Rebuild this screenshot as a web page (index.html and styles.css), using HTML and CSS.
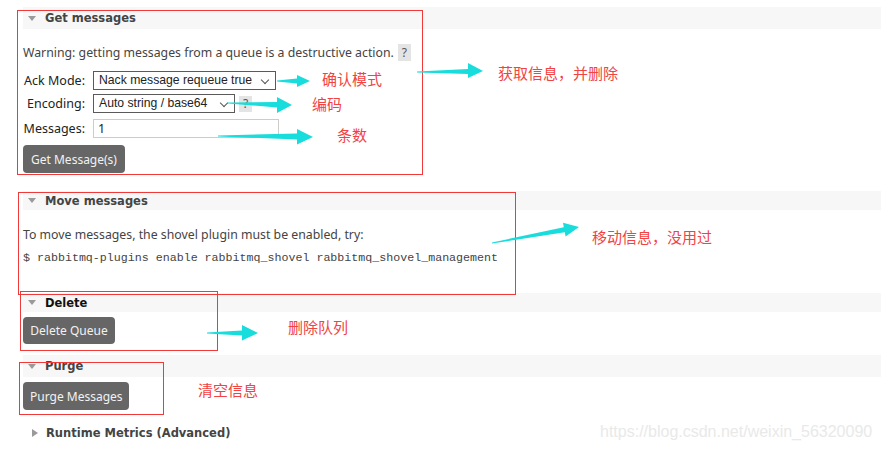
FILE: index.html
```html
<!DOCTYPE html>
<html lang="zh">
<head>
<meta charset="utf-8">
<title>Queue actions</title>
<link rel="stylesheet" href="styles.css">
</head>
<body>
<div class="page">
  <section class="sec sec-get">
    <h2 class="sec-head"><span class="tri"></span>Get messages</h2>
    <p class="warn">Warning: getting messages from a queue is a destructive action. <span class="help">?</span></p>
    <div class="form">
      <div class="row row-ack">
        <label class="lbl">Ack Mode:</label>
        <div class="select sel-ack">Nack message requeue true<span class="chev"></span></div>
      </div>
      <div class="row row-enc">
        <label class="lbl">Encoding:</label>
        <div class="select sel-enc">Auto string / base64<span class="chev"></span></div>
        <span class="help help-enc">?</span>
      </div>
      <div class="row row-msg">
        <label class="lbl">Messages:</label>
        <div class="input">1</div>
      </div>
    </div>
    <button class="btn btn-get">Get Message(s)</button>
  </section>

  <section class="sec sec-move">
    <h2 class="sec-head"><span class="tri"></span>Move messages</h2>
    <p class="move-text">To move messages, the shovel plugin must be enabled, try:</p>
    <p class="cmd">$ rabbitmq-plugins enable rabbitmq_shovel rabbitmq_shovel_management</p>
  </section>

  <section class="sec sec-del">
    <h2 class="sec-head head-del"><span class="tri"></span>Delete</h2>
    <button class="btn btn-del">Delete Queue</button>
  </section>

  <section class="sec sec-purge">
    <h2 class="sec-head head-purge"><span class="tri"></span>Purge</h2>
    <button class="btn btn-purge">Purge Messages</button>
  </section>

  <section class="sec sec-runtime">
    <h2 class="sec-head head-plain"><span class="tri tri-right"></span>Runtime Metrics (Advanced)</h2>
  </section>
</div>

<div class="annot">
  <div class="rbox rbox-get"></div>
  <div class="rbox rbox-move"></div>
  <div class="rbox rbox-del"></div>
  <div class="rbox rbox-purge"></div>

  <svg class="arrows" width="881" height="451" viewBox="0 0 881 451">
    <polygon points="277,80.5 297,78.5 297,75 310,81 297,87 297,83.5 277,81.5"/>
    <polygon points="228,102.5 277,102 277,97 292,105 277,113 277,107.5 228,103.5"/>
    <polygon points="218,135.5 297,133.5 297,129 313,137 297,144.5 297,139.5 218,136.5"/>
    <polygon points="417,71.5 468,69 468,63 483,71 468,78 468,74 417,72.5"/>
    <polygon points="492,243.5 564.8,232.2 565.6,236.6 579,227 563,222.8 563.8,227.2 492,242.5"/>
    <polygon points="207,332.5 242,330.5 242,325 258,333 242,340.5 242,335.5 207,333.5"/>
  </svg>

  <span class="note n-ack">确认模式</span>
  <span class="note n-enc">编码</span>
  <span class="note n-cnt">条数</span>
  <span class="note n-get">获取信息，并删除</span>
  <span class="note n-move">移动信息，没用过</span>
  <span class="note n-del">删除队列</span>
  <span class="note n-purge">清空信息</span>

  <span class="watermark">https://blog.csdn.net/weixin_56320090</span>
</div>
</body>
</html>
```

FILE: styles.css
```css
* { box-sizing: border-box; }

html, body {
  margin: 0;
  padding: 0;
  background: #fff;
}

body {
  width: 881px;
  height: 451px;
  overflow: hidden;
  position: relative;
  font-family: "Noto Sans", "DejaVu Sans", sans-serif;
  font-size: 12.3px;
  color: #444;
}

.page {
  margin-left: 23px;
  padding-top: 7px;
}

.sec { margin: 0; }

.sec-head {
  margin: 0;
  height: 22px;
  background: #f7f7f7;
  display: flex;
  align-items: center;
  padding-left: 5px;
  font-family: "DejaVu Sans", sans-serif;
  font-weight: bold;
  font-size: 11.5px;
  color: #444;
  white-space: nowrap;
}

.tri {
  width: 0;
  height: 0;
  border-left: 4.5px solid transparent;
  border-right: 4.5px solid transparent;
  border-top: 5px solid #9a9a9a;
  margin-right: 9px;
}

.tri-right {
  border-top: 4.5px solid transparent;
  border-bottom: 4.5px solid transparent;
  border-left: 6px solid #9a9a9a;
  border-right: 0;
  margin-left: 4px;
  margin-right: 8px;
}

.warn {
  margin: 14px 0 0;
  height: 18px;
  display: flex;
  align-items: center;
  gap: 4px;
  white-space: nowrap;
}

.help {
  display: inline-flex;
  align-items: center;
  justify-content: center;
  width: 13px;
  height: 17px;
  background: #e4e4e4;
  color: #555;
  font-size: 12px;
}

.form {
  margin-top: 10px;
  display: flex;
  flex-direction: column;
}

.row {
  display: flex;
  align-items: center;
}

.row-enc { margin-top: 4px; }
.row-msg { margin-top: 6px; }

.lbl {
  width: 62px;
  text-align: right;
  margin-right: 8px;
  color: #222;
  font-size: 12.5px;
}

.select {
  position: relative;
  height: 19px;
  border: 1px solid #5a5a5a;
  background: #fff;
  color: #222;
  font-family: "Liberation Sans", Arial, sans-serif;
  font-size: 12.2px;
  line-height: 17px;
  padding-left: 5px;
  white-space: nowrap;
}

.sel-ack { width: 183px; }
.sel-enc { width: 142px; }

.chev {
  position: absolute;
  right: 7px;
  top: 5px;
  width: 6px;
  height: 6px;
  border-right: 1px solid #555;
  border-bottom: 1px solid #555;
  transform: rotate(45deg);
}

.help-enc { margin-left: 4px; height: 16px; }

.input {
  width: 186px;
  height: 19px;
  border: 1px solid #ccc;
  color: #222;
  font-size: 12.5px;
  line-height: 17px;
  padding-left: 4px;
}

.btn {
  display: block;
  border: 0;
  background: #666;
  color: #f2f2f2;
  border-radius: 4px;
  font-family: "Noto Sans", "DejaVu Sans", sans-serif;
  font-size: 12px;
  height: 28px;
  padding: 0 7px;
  white-space: nowrap;
}

.btn-get { margin-top: 7px; width: 102px; }

.sec-move { margin-top: 18px; }
.sec-move .sec-head { height: 19px; }

.move-text {
  margin: 16px 0 0;
  height: 18px;
  line-height: 18px;
  white-space: nowrap;
}

.cmd {
  margin: 5px 0 0;
  height: 18px;
  line-height: 18px;
  font-family: "Liberation Mono", monospace;
  font-size: 11.65px;
  color: #444;
  white-space: nowrap;
}

.sec-del { margin-top: 26px; }
.head-del { height: 19px; color: #111; }
.btn-del { margin-top: 5px; width: 92px; height: 27px; }

.sec-purge { margin-top: 11px; }
.head-purge { height: 22px; }
.btn-purge { margin-top: 5px; width: 106px; }

.sec-runtime { margin-top: 12px; }
.head-plain { background: transparent; height: 22px; }

/* annotations overlay */
.annot {
  position: absolute;
  left: 0;
  top: 0;
  width: 881px;
  height: 451px;
  pointer-events: none;
}

.rbox {
  position: absolute;
  border: 1px solid #f03a3a;
}
.rbox-get { left: 17px; top: 10px; width: 406px; height: 165px; }
.rbox-move { left: 18px; top: 192px; width: 498px; height: 103px; }
.rbox-del { left: 20px; top: 291px; width: 198px; height: 60px; }
.rbox-purge { left: 19px; top: 362px; width: 145px; height: 53px; }

.arrows {
  position: absolute;
  left: 0;
  top: 0;
}
.arrows polygon { fill: #19dcdc; }

.note {
  position: absolute;
  font-family: "Noto Sans CJK SC", sans-serif;
  font-size: 15px;
  line-height: 15px;
  color: #f24343;
  white-space: nowrap;
}
.n-ack { left: 322px; top: 71px; }
.n-enc { left: 312px; top: 96px; }
.n-cnt { left: 337px; top: 127px; }
.n-get { left: 498px; top: 65px; }
.n-move { left: 592px; top: 229px; }
.n-del { left: 288px; top: 319px; }
.n-purge { left: 198px; top: 382px; }

.watermark {
  position: absolute;
  left: 600px;
  top: 423px;
  font-family: "Liberation Sans", sans-serif;
  font-size: 16px;
  line-height: 18px;
  color: #e9e9e9;
  white-space: nowrap;
}
```
